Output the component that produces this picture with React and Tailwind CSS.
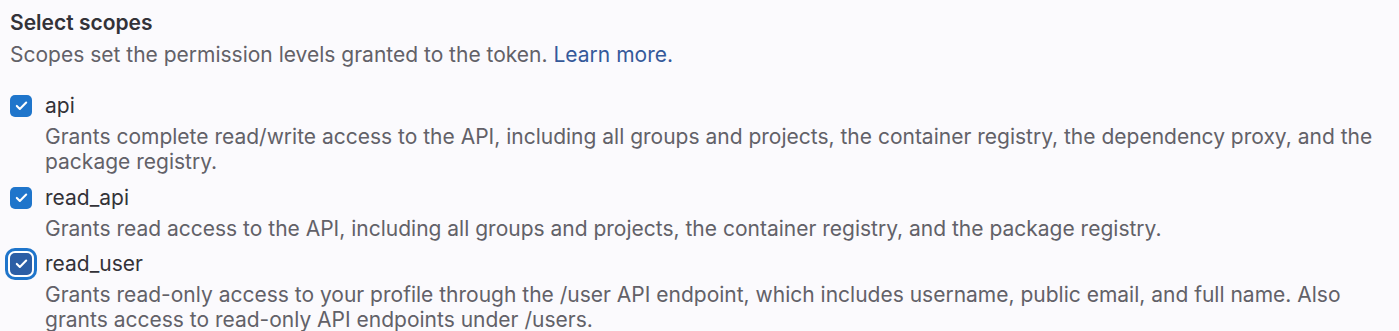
import React from "react";

function Check({ focused }) {
  return (
    <span
      className={
        "mr-[13px] flex h-[22px] w-[22px] shrink-0 items-center justify-center rounded-[5px] " +
        (focused
          ? "bg-[#2c5ea5] shadow-[0_0_0_2px_#ffffff,0_0_0_5px_#1f75cb]"
          : "bg-[#1f75cb]")
      }
    >
      <svg width="15" height="15" viewBox="0 0 16 16" fill="none">
        <path
          d="M3 8.5l3.2 3.2L13 4.8"
          stroke="white"
          strokeWidth="2.2"
          strokeLinecap="round"
          strokeLinejoin="round"
        />
      </svg>
    </span>
  );
}

function Scope({ name, desc, focused, className = "" }) {
  return (
    <div className={className}>
      <div className="flex h-[25px] items-center">
        <Check focused={focused} />
        <span className="text-[#333238]">{name}</span>
      </div>
      <p className="mt-[6px] pl-[35px] text-[#626168]">{desc}</p>
    </div>
  );
}

export default function App() {
  return (
    <div
      className="min-h-[331px] w-full bg-[#fbfafd] pl-[10px] pr-[12px] pt-[10px] text-[21px] leading-[25px]"
      style={{ fontFamily: "Inter, 'Noto Sans', sans-serif" }}
    >
      <h2 className="font-semibold text-[#333238]">Select scopes</h2>
      <p className="mt-[7px] text-[#626168]">
        Scopes set the permission levels granted to the token.{" "}
        <a className="text-[#35599a]">Learn more.</a>
      </p>
      <Scope
        className="mt-[26px]"
        name="api"
        desc="Grants complete read/write access to the API, including all groups and projects, the container registry, the dependency proxy, and the package registry."
      />
      <Scope
        className="mt-[11px]"
        name="read_api"
        desc="Grants read access to the API, including all groups and projects, the container registry, and the package registry."
      />
      <Scope
        className="mt-[10px]"
        name="read_user"
        focused
        desc="Grants read-only access to your profile through the /user API endpoint, which includes username, public email, and full name. Also grants access to read-only API endpoints under /users."
      />
    </div>
  );
}
